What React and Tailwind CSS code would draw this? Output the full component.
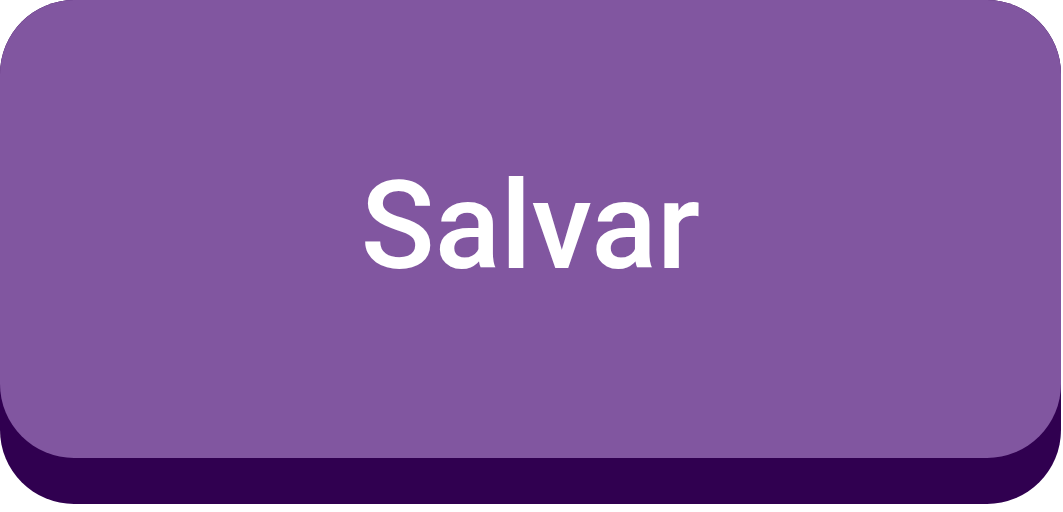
import React from 'react';

export default function App() {
    return (
        <div className="w-[1063px] h-[512px] bg-white">
            <button className="w-[1061px] h-[504px] bg-[#300050] rounded-[74px] pb-[46px] flex flex-col">
                <span className="flex-1 w-full bg-[#8156a0] rounded-[74px] flex items-center justify-center text-white text-[122px] font-medium leading-none font-['Roboto',sans-serif] pb-[4px]">
                    Salvar
                </span>
            </button>
        </div>
    );
}
